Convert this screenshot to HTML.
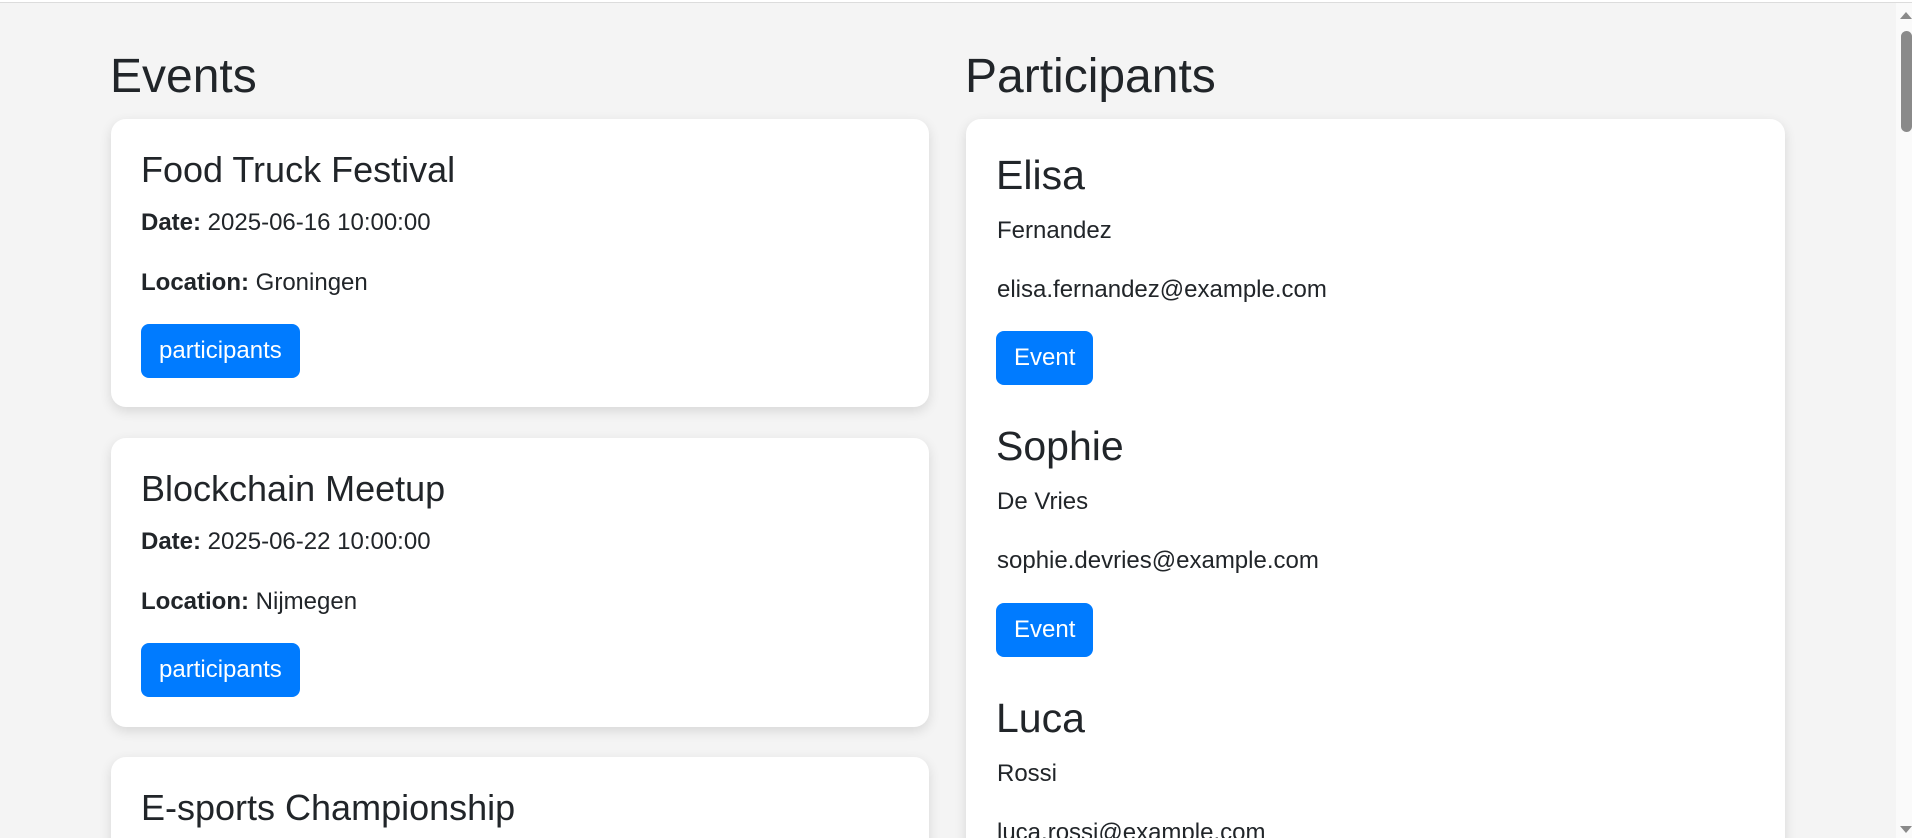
<!DOCTYPE html>
<html style="height:838px;overflow:hidden"><head><meta charset="utf-8"><style>
html,body{margin:0;padding:0;}
body{width:1912px;height:838px;overflow:hidden;background:#f4f4f4;position:relative;font-family:"Liberation Sans",Arial,sans-serif;color:#212529;}
.t{position:absolute;white-space:nowrap;line-height:1;}
.card{position:absolute;background:#fff;border-radius:15px;box-shadow:0 4px 12px rgba(0,0,0,.12);}
.btn{position:absolute;background:#007bff;color:#fff;border-radius:8px;height:54px;line-height:54px;font-size:24px;padding:0 18px;white-space:nowrap;}
.h1{font-size:48px;}
.et{font-size:36px;}
.pn{font-size:41px;}
.b{font-size:24px;}
</style></head><body>
<div style="position:absolute;left:0;top:0;width:1912px;height:2px;background:#fff"></div>
<div style="position:absolute;left:0;top:2px;width:1912px;height:1px;background:#dcdcdc"></div>

<div class="t h1" style="left:110px;top:53px">Events</div>
<div class="t h1" style="left:965px;top:53px">Participants</div>

<div class="card" style="left:111px;top:119px;width:818px;height:288px"></div>
<div class="t et" style="left:141px;top:152px">Food Truck Festival</div>
<div class="t b" style="left:141px;top:211px"><b>Date:</b> 2025-06-16 10:00:00</div>
<div class="t b" style="left:141px;top:271px"><b>Location:</b> Groningen</div>
<div class="btn" style="left:141px;top:324px">participants</div>

<div class="card" style="left:111px;top:438px;width:818px;height:289px"></div>
<div class="t et" style="left:141px;top:471px">Blockchain Meetup</div>
<div class="t b" style="left:141px;top:530px"><b>Date:</b> 2025-06-22 10:00:00</div>
<div class="t b" style="left:141px;top:590px"><b>Location:</b> Nijmegen</div>
<div class="btn" style="left:141px;top:643px">participants</div>

<div class="card" style="left:111px;top:757px;width:818px;height:120px"></div>
<div class="t et" style="left:141px;top:790px">E-sports Championship</div>

<div class="card" style="left:966px;top:119px;width:819px;height:760px"></div>
<div class="t pn" style="left:996px;top:155px">Elisa</div>
<div class="t b" style="left:997px;top:219px">Fernandez</div>
<div class="t b" style="left:997px;top:278px">elisa.fernandez@example.com</div>
<div class="btn" style="left:996px;top:331px">Event</div>

<div class="t pn" style="left:996px;top:426px">Sophie</div>
<div class="t b" style="left:997px;top:490px">De Vries</div>
<div class="t b" style="left:997px;top:549px">sophie.devries@example.com</div>
<div class="btn" style="left:996px;top:603px">Event</div>

<div class="t pn" style="left:996px;top:698px">Luca</div>
<div class="t b" style="left:997px;top:762px">Rossi</div>
<div class="t b" style="left:997px;top:821px">luca.rossi@example.com</div>

<div style="position:absolute;left:1896px;top:3px;width:16px;height:835px;background:#fafafa"></div>
<div style="position:absolute;left:1900px;top:12px;width:0;height:0;border-left:6px solid transparent;border-right:6px solid transparent;border-bottom:7px solid #8a8a8a"></div>
<div style="position:absolute;left:1901px;top:31px;width:11px;height:101px;background:#8a8a8a;border-radius:6px"></div>
<div style="position:absolute;left:1900px;top:826px;width:0;height:0;border-left:6px solid transparent;border-right:6px solid transparent;border-top:7px solid #8a8a8a"></div>
</body></html>
